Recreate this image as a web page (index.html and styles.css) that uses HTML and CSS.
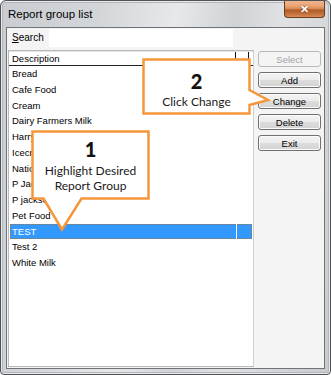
FILE: index.html
```html
<!DOCTYPE html>
<html lang="en">
<head>
    <meta charset="UTF-8">
    <title>Report group list</title>
    <link rel="stylesheet" href="styles.css">
</head>
<body>
    <div class="window">
        <div class="titlebar">
            <span class="title">Report group list</span>
            <div class="close">&#x2715;</div>
        </div>
        <div class="client">
            <div class="search">
                <label><u>S</u>earch</label>
                <div class="input"></div>
            </div>
            <div class="list">
                <div class="head">
                    <span class="col1">Description</span>
                    <span class="col2"></span>
                </div>
                <div class="row">Bread</div>
                <div class="row">Cafe Food</div>
                <div class="row">Cream</div>
                <div class="row">Dairy Farmers Milk</div>
                <div class="row">Harry</div>
                <div class="row">Icecream</div>
                <div class="row">National</div>
                <div class="row">P Jackson</div>
                <div class="row">P jackson</div>
                <div class="row">Pet Food</div>
                <div class="row on"><span class="col1">TEST</span><span class="col2"></span></div>
                <div class="row">Test 2</div>
                <div class="row">White Milk</div>
            </div>
            <div class="panel">
                <button class="btn" disabled>Select</button>
                <button class="btn">Add</button>
                <button class="btn">Change</button>
                <button class="btn">Delete</button>
                <button class="btn">Exit</button>
            </div>
        </div>

        <!-- callouts -->
        <div class="callout c1">
            <svg width="124" height="106" viewBox="0 0 124 106">
                <path d="M1.5 1.5 H117.5 V68.5 H50.5 L31 99.5 L12.5 68.5 H1.5 Z" fill="#fff" stroke="#f6963a" stroke-width="2.5" stroke-linejoin="miter"/>
            </svg>
            <div class="num">1</div>
            <div class="txt">Highlight Desired<br>Report Group</div>
        </div>
        <div class="callout c2">
            <svg width="132" height="60" viewBox="0 0 132 60">
                <path d="M1.5 1.5 H107.5 V32 L126 42 L107.5 47 V55.5 H1.5 Z" fill="#fff" stroke="#f6963a" stroke-width="2.5" stroke-linejoin="miter"/>
            </svg>
            <div class="num">2</div>
            <div class="txt">Click Change</div>
        </div>
    </div>
</body>
</html>
```

FILE: styles.css
```css
* { margin: 0; padding: 0; box-sizing: border-box; }
body { width: 331px; height: 375px; background: #fff; font-family: "Liberation Sans", Arial, sans-serif; }

.window {
    position: relative;
    width: 331px;
    height: 375px;
    border: 1px solid #4f5257;
    border-radius: 6px 6px 4px 4px;
    background: linear-gradient(100deg, #c9ccd0 0%, #d3d6d9 25%, #e6e8ea 45%, #d0d3d6 60%, #dfe1e3 72%, #c8cbce 100%);
    padding: 0 5px 5px 5px;
    display: flex;
    flex-direction: column;
    box-shadow: inset 0 0 0 1px #e8eaec, inset 0 0 0 2px #b4b7ba;
}
.titlebar {
    height: 26px;
    display: flex;
    justify-content: space-between;
    align-items: flex-start;
    padding-left: 2px;
}
.title {
    font-size: 11.5px;
    line-height: 27px;
    color: #000;
}
.close {
    width: 41px;
    height: 17px;
    border: 1px solid #6b3b22;
    border-top: none;
    border-radius: 0 0 4px 4px;
    background: linear-gradient(#efb58c 0%, #e9a679 30%, #d4874f 50%, #b35a2a 55%, #c2703b 80%, #d98d55 100%);
    color: #fff;
    font-size: 11px;
    font-weight: bold;
    text-align: center;
    line-height: 16px;
    text-shadow: 0 0 2px #6b2f10;
}

.client {
    flex: 1;
    border: 1px solid #6f7276;
    background: #f4f4f4;
    display: grid;
    grid-template-columns: 247px 1fr;
    grid-template-rows: 22px 1fr;
    padding: 0 0 1px 1px;
}
.search {
    grid-column: 1 / 3;
    display: flex;
    align-items: flex-start;
    padding-left: 4px;
    padding-top: 1px;
}
.search label {
    font-size: 10px;
    line-height: 17px;
    color: #000;
    width: 37px;
}
.search .input {
    width: 184px;
    height: 18px;
    background: #fff;
}

.list {
    grid-row: 2;
    grid-column: 1;
    width: 246px;
    background: #fff;
    border: 1px solid #b9b9b9;
    border-right-color: #d0d0d0;
    font-size: 9.5px;
    color: #000;
}
.head {
    display: flex;
    height: 15px;
    border-bottom: 1px solid #222;
    border-top: 1px solid #e2e2e2;
}
.head span { line-height: 14px; }
.col1 { width: 227px; padding-left: 3px; }
.head .col1 { border-right: 1px solid #111; }
.head .col2 { width: 13px; border-right: 1px solid #111; }
.row {
    height: 15.75px;
    line-height: 15.75px;
    padding-left: 3px;
}
.row.on {
    display: flex;
    margin: 0 1px;
    padding-left: 0;
    background: #3399ff;
    color: #fff;
    outline: 1px dotted #a2763f;
    outline-offset: -1px;
}
.row.on .col1 { width: 226px; padding-left: 2px; }
.row.on .col2 { border-left: 1px solid #fff; }

.panel {
    grid-row: 2;
    grid-column: 2;
    display: flex;
    flex-direction: column;
    gap: 5px;
    padding: 1px 0 0 3px;
}
.btn {
    width: 63px;
    height: 16px;
    border: 1px solid #707070;
    border-radius: 3px;
    background: linear-gradient(#f3f3f3 0%, #ececec 48%, #dcdcdc 52%, #d4d4d4 100%);
    font-family: "Liberation Sans", Arial, sans-serif;
    font-size: 9.5px;
    color: #000;
    box-shadow: inset 0 0 0 1px #fbfbfb;
}
.btn:disabled {
    border-color: #b5b9bd;
    background: #f4f4f4;
    color: #a3a3a3;
    box-shadow: none;
}

.callout {
    position: absolute;
    font-family: Lato, "Open Sans", sans-serif;
    color: #1a1a1a;
    text-align: center;
}
.callout svg { position: absolute; left: 0; top: 0; }
.callout .num, .callout .txt { position: relative; }
.callout .num { font-size: 20px; font-weight: 900; line-height: 20px; color: #111; }
.callout .txt { font-size: 12px; line-height: 15px; }
.c1 { left: 30px; top: 129px; width: 124px; height: 106px; }
.c1 .num { width: 119px; margin-top: 9px; }
.c1 .txt { width: 119px; margin-top: 4px; }
.c2 { left: 141px; top: 57px; width: 132px; height: 60px; }
.c2 .num { width: 109px; margin-top: 13px; }
.c2 .txt { width: 109px; margin-top: 3px; }
```
